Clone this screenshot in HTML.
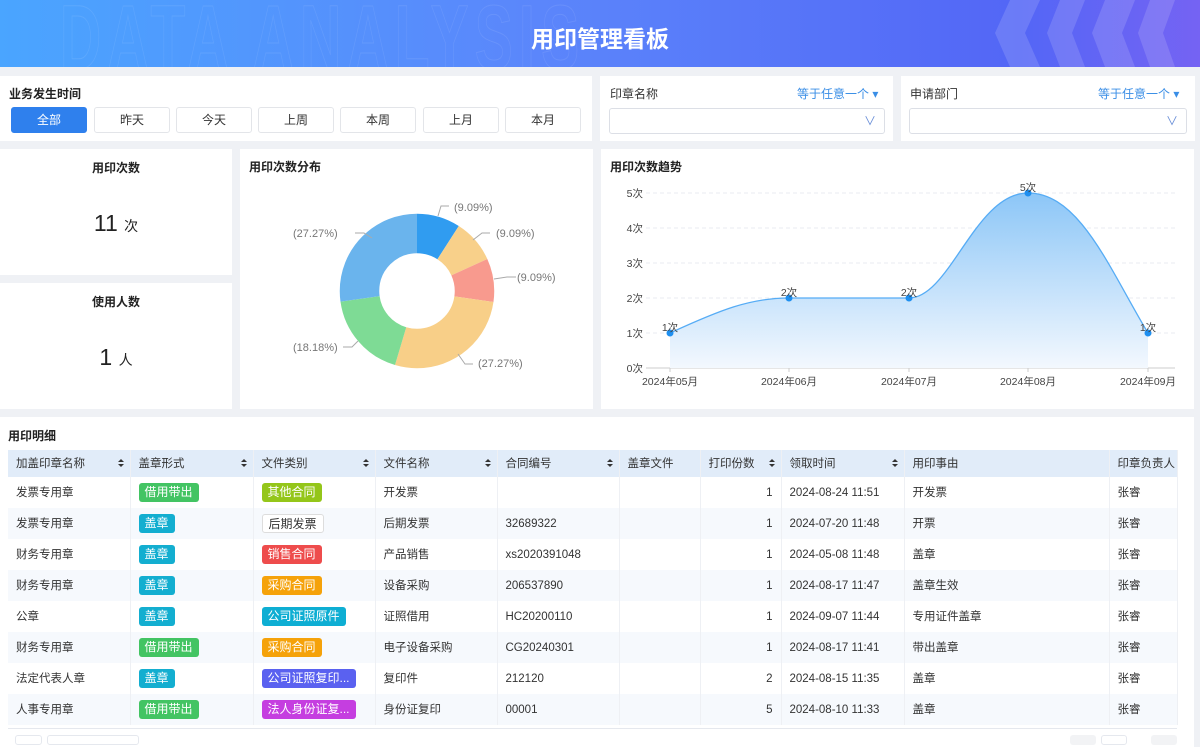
<!DOCTYPE html>
<html><head><meta charset="utf-8"><style>
*{margin:0;padding:0;box-sizing:border-box}
body{width:1200px;height:742px;overflow:hidden;background:#eff1f5;font-family:"Liberation Sans","Noto Sans CJK SC",sans-serif;color:#333;position:relative}
.abs{position:absolute}
.card{position:absolute;background:#fff}
.hdr{left:0;top:0;width:1200px;height:67px;background:linear-gradient(90deg,#4aa5ff 0%,#5b86fb 45%,#5366f6 85%,#7563f3 100%);overflow:hidden}
.ttl{font-weight:bold;font-size:13px;color:#222}
.btn{position:absolute;top:107px;height:26px;border:1px solid #e3e5e9;border-radius:3px;font-size:12px;text-align:center;line-height:24px;color:#333;background:#fff}
.sel{position:absolute;height:26px;border:1px solid #dcdfe6;border-radius:3px;background:#fff}
.blue{color:#3a8ee6;font-size:12px}
table{border-collapse:collapse;font-size:11.5px;color:#333}
td,th{height:31px;padding:0 8px;text-align:left;font-weight:normal;border-right:1px solid #eef0f4;white-space:nowrap;vertical-align:middle;line-height:14px}
th{height:27px;background:#e1ecf9;position:relative}
tr:nth-child(odd) td{background:#f6f9fd}
tr:nth-child(even) td{background:#fff}
.tag{display:inline-block;vertical-align:middle;color:#fff;font-size:12px;padding:0 6px;height:19px;line-height:19px;border-radius:3px}
.s::after{content:"";position:absolute;right:6px;top:9px;border:3px solid transparent;border-bottom:3px solid #333;border-top:0}
.s::before{content:"";position:absolute;right:6px;top:14px;border:3px solid transparent;border-top:3px solid #333;border-bottom:0}
</style></head><body>
<div class="abs hdr">
<div class="abs" style="left:60px;top:-14px;font-size:92px;font-weight:bold;letter-spacing:10px;color:transparent;-webkit-text-stroke:1px rgba(255,255,255,0.09);transform:scaleX(0.62);transform-origin:0 0;white-space:nowrap">DATA ANALYSIS</div>
<svg class="abs" style="left:975px;top:0" width="225" height="67"><g fill="rgba(255,255,255,0.14)"><polygon points="35,0 65,0 50,33 65,67 35,67 20,33"/><polygon points="85,0 110,0 97,33 110,67 85,67 72,33"/><polygon points="130,0 160,0 147,33 160,67 130,67 117,33"/><polygon points="175,0 200,0 188,33 200,67 175,67 163,33"/></g></svg>
<div class="abs" style="left:0;width:1200px;top:20px;text-align:center;color:#fff;font-size:23px;font-weight:bold">用印管理看板</div>
</div>

<div class="card" style="left:0;top:76px;width:592px;height:65px"></div>
<div class="abs ttl" style="left:9px;top:85px;font-size:12px">业务发生时间</div>
<div class="btn" style="left:11px;width:76px;background:#2f80ed;color:#fff;border-color:#2f80ed">全部</div>
<div class="btn" style="left:94px;width:76px">昨天</div>
<div class="btn" style="left:176px;width:76px">今天</div>
<div class="btn" style="left:258px;width:76px">上周</div>
<div class="btn" style="left:340px;width:76px">本周</div>
<div class="btn" style="left:423px;width:76px">上月</div>
<div class="btn" style="left:505px;width:76px">本月</div>

<div class="card" style="left:600px;top:76px;width:293px;height:65px"></div>
<div class="abs" style="left:610px;top:85px;font-size:12px">印章名称</div>
<div class="abs blue" style="left:797px;top:85px">等于任意一个 ▾</div>
<div class="sel" style="left:609px;top:108px;width:276px"><span class="abs" style="right:8px;top:3px;color:#6a8fd8;font-size:12px">∨</span></div>
<div class="card" style="left:901px;top:76px;width:294px;height:65px"></div>
<div class="abs" style="left:910px;top:85px;font-size:12px">申请部门</div>
<div class="abs blue" style="left:1098px;top:85px">等于任意一个 ▾</div>
<div class="sel" style="left:909px;top:108px;width:278px"><span class="abs" style="right:8px;top:3px;color:#6a8fd8;font-size:12px">∨</span></div>

<div class="card" style="left:0;top:149px;width:232px;height:126px"></div>
<div class="abs ttl" style="left:0;width:232px;text-align:center;top:159px;font-size:12px">用印次数</div>
<div class="abs" style="left:0;width:232px;text-align:center;top:210px;font-size:23px;color:#222">11 <span style="font-size:14px">次</span></div>
<div class="card" style="left:0;top:283px;width:232px;height:126px"></div>
<div class="abs ttl" style="left:0;width:232px;text-align:center;top:293px;font-size:12px">使用人数</div>
<div class="abs" style="left:0;width:232px;text-align:center;top:344px;font-size:23px;color:#222">1 <span style="font-size:14px">人</span></div>

<div class="card" style="left:240px;top:149px;width:353px;height:260px"></div>
<div class="abs ttl" style="left:249px;top:158px;font-size:12px">用印次数分布</div>
<svg class="abs" style="left:240px;top:149px" width="353" height="260">
<g transform="translate(177,142) rotate(-90)" fill="none" stroke-width="39.5">
<circle r="57.5" stroke="#309cf0" stroke-dasharray="32.84 400"/>
<circle r="57.5" stroke="#f8d08a" stroke-dasharray="0 32.84 32.84 400"/>
<circle r="57.5" stroke="#f89a8e" stroke-dasharray="0 65.68 32.84 400"/>
<circle r="57.5" stroke="#f8cf88" stroke-dasharray="0 98.52 98.53 400"/>
<circle r="57.5" stroke="#7edb95" stroke-dasharray="0 197.05 65.69 400"/>
<circle r="57.5" stroke="#6ab4ed" stroke-dasharray="0 262.74 98.54 400"/>
</g>
<g stroke="#aaa" fill="none" stroke-width="1"><path d="M198,67 L201,57 L209,57"/><path d="M233,91 L242,84 L250,84"/><path d="M254,130 L267,128 L276,128"/><path d="M218,205 L225,215 L233,215"/><path d="M132,89 L124,84 L115,84"/><path d="M118,192 L112,198 L103,198"/></g>
<g font-size="11" fill="#777"><text x="214" y="62">(9.09%)</text><text x="256" y="88">(9.09%)</text><text x="277" y="132">(9.09%)</text><text x="238" y="218">(27.27%)</text><text x="53" y="88">(27.27%)</text><text x="53" y="202">(18.18%)</text></g>
</svg>

<div class="card" style="left:601px;top:149px;width:593px;height:260px"></div>
<div class="abs ttl" style="left:610px;top:158px;font-size:12px">用印次数趋势</div>
<svg class="abs" style="left:0;top:0" width="1200" height="420">
<defs><linearGradient id="g" x1="0" y1="0" x2="0" y2="1"><stop offset="0" stop-color="#8cc6f7"/><stop offset="1" stop-color="#f3f8fe"/></linearGradient></defs>
<g stroke="#e8ebf0" stroke-dasharray="4 3"><path d="M646,193H1175M646,228H1175M646,263H1175M646,298H1175M646,333H1175"/></g>
<path d="M646,368H1175" stroke="#ccc"/>
<path d="M670,368V372M789,368V372M909,368V372M1028,368V372M1148,368V372" stroke="#ccc"/>
<path d="M670,333 C720,310 750,298 789,298 L909,298 C950,298 975,193 1028,193 C1080,193 1110,270 1148,333 L1148,368 L670,368Z" fill="url(#g)"/>
<path d="M670,333 C720,310 750,298 789,298 L909,298 C950,298 975,193 1028,193 C1080,193 1110,270 1148,333" fill="none" stroke="#56acf5" stroke-width="1.3"/>
<g fill="#1e8ff0"><circle cx="670" cy="333" r="3.5"/><circle cx="789" cy="298" r="3.5"/><circle cx="909" cy="298" r="3.5"/><circle cx="1028" cy="193" r="3.5"/><circle cx="1148" cy="333" r="3.5"/></g>
<g font-size="10.5" fill="#444" text-anchor="middle"><text x="670" y="331">1次</text><text x="789" y="296">2次</text><text x="909" y="296">2次</text><text x="1028" y="191">5次</text><text x="1148" y="331">1次</text>
<text x="670" y="385">2024年05月</text><text x="789" y="385">2024年06月</text><text x="909" y="385">2024年07月</text><text x="1028" y="385">2024年08月</text><text x="1148" y="385">2024年09月</text></g>
<g font-size="10.5" fill="#444" text-anchor="end"><text x="643" y="197">5次</text><text x="643" y="232">4次</text><text x="643" y="267">3次</text><text x="643" y="302">2次</text><text x="643" y="337">1次</text><text x="643" y="372">0次</text></g>
</svg>

<div class="card" style="left:0;top:417px;width:1194px;height:330px"></div>
<div class="abs ttl" style="left:8px;top:427px;font-size:12px">用印明细</div>
<table class="abs" style="left:8px;top:450px;width:1169px;table-layout:fixed">
<colgroup><col style="width:122px"><col style="width:123px"><col style="width:122px"><col style="width:122px"><col style="width:122px"><col style="width:81px"><col style="width:81px"><col style="width:123px"><col style="width:205px"><col style="width:68px"></colgroup>
<tr><th class="s">加盖印章名称</th><th class="s">盖章形式</th><th class="s">文件类别</th><th class="s">文件名称</th><th class="s">合同编号</th><th>盖章文件</th><th class="s">打印份数</th><th class="s">领取时间</th><th>用印事由</th><th>印章负责人</th></tr>
<tr><td>发票专用章</td><td><span class="tag" style="background:#43c463">借用带出</span></td><td><span class="tag" style="background:#94c61a">其他合同</span></td><td>开发票</td><td></td><td></td><td style="text-align:right">1</td><td>2024-08-24 11:51</td><td>开发票</td><td>张睿</td></tr>
<tr><td>发票专用章</td><td><span class="tag" style="background:#13aed0">盖章</span></td><td><span class="tag" style="background:#fff;color:#333;border:1px solid #ddd">后期发票</span></td><td>后期发票</td><td>32689322</td><td></td><td style="text-align:right">1</td><td>2024-07-20 11:48</td><td>开票</td><td>张睿</td></tr>
<tr><td>财务专用章</td><td><span class="tag" style="background:#13aed0">盖章</span></td><td><span class="tag" style="background:#ee4c4c">销售合同</span></td><td>产品销售</td><td>xs2020391048</td><td></td><td style="text-align:right">1</td><td>2024-05-08 11:48</td><td>盖章</td><td>张睿</td></tr>
<tr><td>财务专用章</td><td><span class="tag" style="background:#13aed0">盖章</span></td><td><span class="tag" style="background:#f5a20a">采购合同</span></td><td>设备采购</td><td>206537890</td><td></td><td style="text-align:right">1</td><td>2024-08-17 11:47</td><td>盖章生效</td><td>张睿</td></tr>
<tr><td>公章</td><td><span class="tag" style="background:#13aed0">盖章</span></td><td><span class="tag" style="background:#0eaed3">公司证照原件</span></td><td>证照借用</td><td>HC20200110</td><td></td><td style="text-align:right">1</td><td>2024-09-07 11:44</td><td>专用证件盖章</td><td>张睿</td></tr>
<tr><td>财务专用章</td><td><span class="tag" style="background:#43c463">借用带出</span></td><td><span class="tag" style="background:#f5a20a">采购合同</span></td><td>电子设备采购</td><td>CG20240301</td><td></td><td style="text-align:right">1</td><td>2024-08-17 11:41</td><td>带出盖章</td><td>张睿</td></tr>
<tr><td>法定代表人章</td><td><span class="tag" style="background:#13aed0">盖章</span></td><td><span class="tag" style="background:#5a61f0">公司证照复印...</span></td><td>复印件</td><td>212120</td><td></td><td style="text-align:right">2</td><td>2024-08-15 11:35</td><td>盖章</td><td>张睿</td></tr>
<tr><td>人事专用章</td><td><span class="tag" style="background:#43c463">借用带出</span></td><td><span class="tag" style="background:#c53ee0">法人身份证复...</span></td><td>身份证复印</td><td>00001</td><td></td><td style="text-align:right">5</td><td>2024-08-10 11:33</td><td>盖章</td><td>张睿</td></tr>
</table>
<div class="abs" style="left:8px;top:728px;width:1169px;height:1px;background:#e5e8ee"></div>
<div class="abs" style="left:15px;top:735px;width:27px;height:10px;border:1px solid #e5e8ee;border-radius:3px"></div>
<div class="abs" style="left:47px;top:735px;width:92px;height:10px;border:1px solid #e5e8ee;border-radius:3px"></div>
<div class="abs" style="left:1070px;top:735px;width:26px;height:10px;background:#f2f3f5;border-radius:3px"></div>
<div class="abs" style="left:1101px;top:735px;width:26px;height:10px;border:1px solid #e5e8ee;border-radius:3px"></div>
<div class="abs" style="left:1151px;top:735px;width:26px;height:10px;background:#f2f3f5;border-radius:3px"></div>
</body></html>
